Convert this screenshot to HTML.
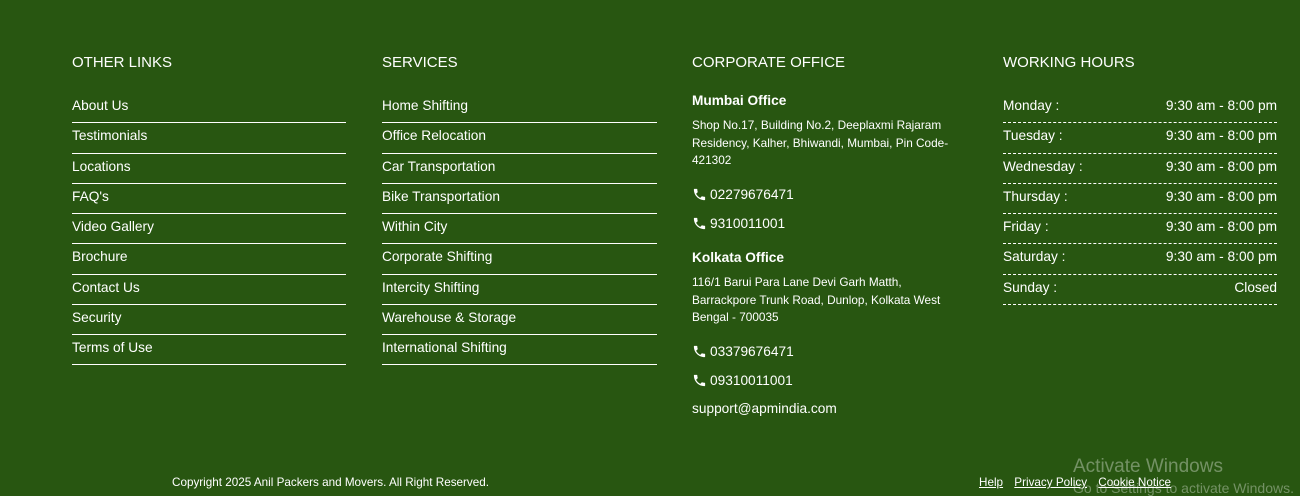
<!DOCTYPE html>
<html><head><meta charset="utf-8"><style>
body{margin:0;width:1300px;height:493px;background:#285611;font-family:"Liberation Sans",Arial,sans-serif;color:#fff;position:relative;overflow:hidden}
.h{position:absolute;top:54px;font-size:15px;letter-spacing:0}
ul{position:absolute;top:93px;margin:0;padding:0;list-style:none;font-size:13.7px}
li{height:29.25px;line-height:26px;border-bottom:1px solid #fff}
.wh li{border-bottom:1px dashed #fff;display:flex;justify-content:space-between}
.a{position:absolute;left:692px;width:270px;font-size:13.7px}
.b{font-weight:bold;font-size:13.7px}
.s{font-size:11.8px;line-height:17.5px;width:262px}
.p{font-size:13.7px;display:flex;align-items:center}
.p svg{margin-right:3px}
.f{position:absolute;top:476px;font-size:11.7px}
.f a{color:#fff;text-decoration:underline;margin-right:8px}
</style></head><body>
<div class="h" style="left:72px">OTHER LINKS</div>
<div class="h" style="left:382px">SERVICES</div>
<div class="h" style="left:692px">CORPORATE OFFICE</div>
<div class="h" style="left:1003px">WORKING HOURS</div>
<ul style="left:72px;width:274px"><li>About Us</li><li>Testimonials</li><li>Locations</li><li>FAQ's</li><li>Video Gallery</li><li>Brochure</li><li>Contact Us</li><li>Security</li><li>Terms of Use</li></ul>
<ul style="left:382px;width:275px"><li>Home Shifting</li><li>Office Relocation</li><li>Car Transportation</li><li>Bike Transportation</li><li>Within City</li><li>Corporate Shifting</li><li>Intercity Shifting</li><li>Warehouse &amp; Storage</li><li>International Shifting</li></ul>
<ul class="wh" style="left:1003px;width:274px"><li><span>Monday :</span><span>9:30 am - 8:00 pm</span></li><li><span>Tuesday :</span><span>9:30 am - 8:00 pm</span></li><li><span>Wednesday :</span><span>9:30 am - 8:00 pm</span></li><li><span>Thursday :</span><span>9:30 am - 8:00 pm</span></li><li><span>Friday :</span><span>9:30 am - 8:00 pm</span></li><li><span>Saturday :</span><span>9:30 am - 8:00 pm</span></li><li><span>Sunday :</span><span>Closed</span></li></ul>
<div class="a b" style="top:93px">Mumbai Office</div>
<div class="a s" style="top:117px">Shop No.17, Building No.2, Deeplaxmi Rajaram Residency, Kalher, Bhiwandi, Mumbai, Pin Code-421302</div>
<div class="a p" style="top:187px"><svg width="15" height="15" viewBox="0 0 24 24"><path fill="#fff" d="M6.6 10.8c1.4 2.8 3.8 5.1 6.6 6.6l2.2-2.2c.3-.3.7-.4 1-.2 1.1.4 2.3.6 3.6.6.6 0 1 .4 1 1V20c0 .6-.4 1-1 1C10.6 21 3 13.4 3 4c0-.6.4-1 1-1h3.5c.6 0 1 .4 1 1 0 1.3.2 2.5.6 3.6.1.3 0 .7-.2 1z"/></svg>02279676471</div>
<div class="a p" style="top:216px"><svg width="15" height="15" viewBox="0 0 24 24"><path fill="#fff" d="M6.6 10.8c1.4 2.8 3.8 5.1 6.6 6.6l2.2-2.2c.3-.3.7-.4 1-.2 1.1.4 2.3.6 3.6.6.6 0 1 .4 1 1V20c0 .6-.4 1-1 1C10.6 21 3 13.4 3 4c0-.6.4-1 1-1h3.5c.6 0 1 .4 1 1 0 1.3.2 2.5.6 3.6.1.3 0 .7-.2 1z"/></svg>9310011001</div>
<div class="a b" style="top:250px">Kolkata Office</div>
<div class="a s" style="top:274px">116/1 Barui Para Lane Devi Garh Matth, Barrackpore Trunk Road, Dunlop, Kolkata West Bengal - 700035</div>
<div class="a p" style="top:344px"><svg width="15" height="15" viewBox="0 0 24 24"><path fill="#fff" d="M6.6 10.8c1.4 2.8 3.8 5.1 6.6 6.6l2.2-2.2c.3-.3.7-.4 1-.2 1.1.4 2.3.6 3.6.6.6 0 1 .4 1 1V20c0 .6-.4 1-1 1C10.6 21 3 13.4 3 4c0-.6.4-1 1-1h3.5c.6 0 1 .4 1 1 0 1.3.2 2.5.6 3.6.1.3 0 .7-.2 1z"/></svg>03379676471</div>
<div class="a p" style="top:373px"><svg width="15" height="15" viewBox="0 0 24 24"><path fill="#fff" d="M6.6 10.8c1.4 2.8 3.8 5.1 6.6 6.6l2.2-2.2c.3-.3.7-.4 1-.2 1.1.4 2.3.6 3.6.6.6 0 1 .4 1 1V20c0 .6-.4 1-1 1C10.6 21 3 13.4 3 4c0-.6.4-1 1-1h3.5c.6 0 1 .4 1 1 0 1.3.2 2.5.6 3.6.1.3 0 .7-.2 1z"/></svg>09310011001</div>
<div class="a" style="top:401px">support@apmindia.com</div>
<div class="f" style="left:172px">Copyright 2025 Anil Packers and Movers. All Right Reserved.</div>
<div class="f" style="left:979px"><a>Help</a> <a>Privacy Policy</a> <a>Cookie Notice</a></div>
<div style="position:absolute;left:1073px;top:456px;font-size:19px;color:rgba(255,255,255,0.35)">Activate Windows</div>
<div style="position:absolute;left:1073px;top:480px;font-size:14px;color:rgba(255,255,255,0.35);white-space:nowrap">Go to Settings to activate Windows.</div>
</body></html>
